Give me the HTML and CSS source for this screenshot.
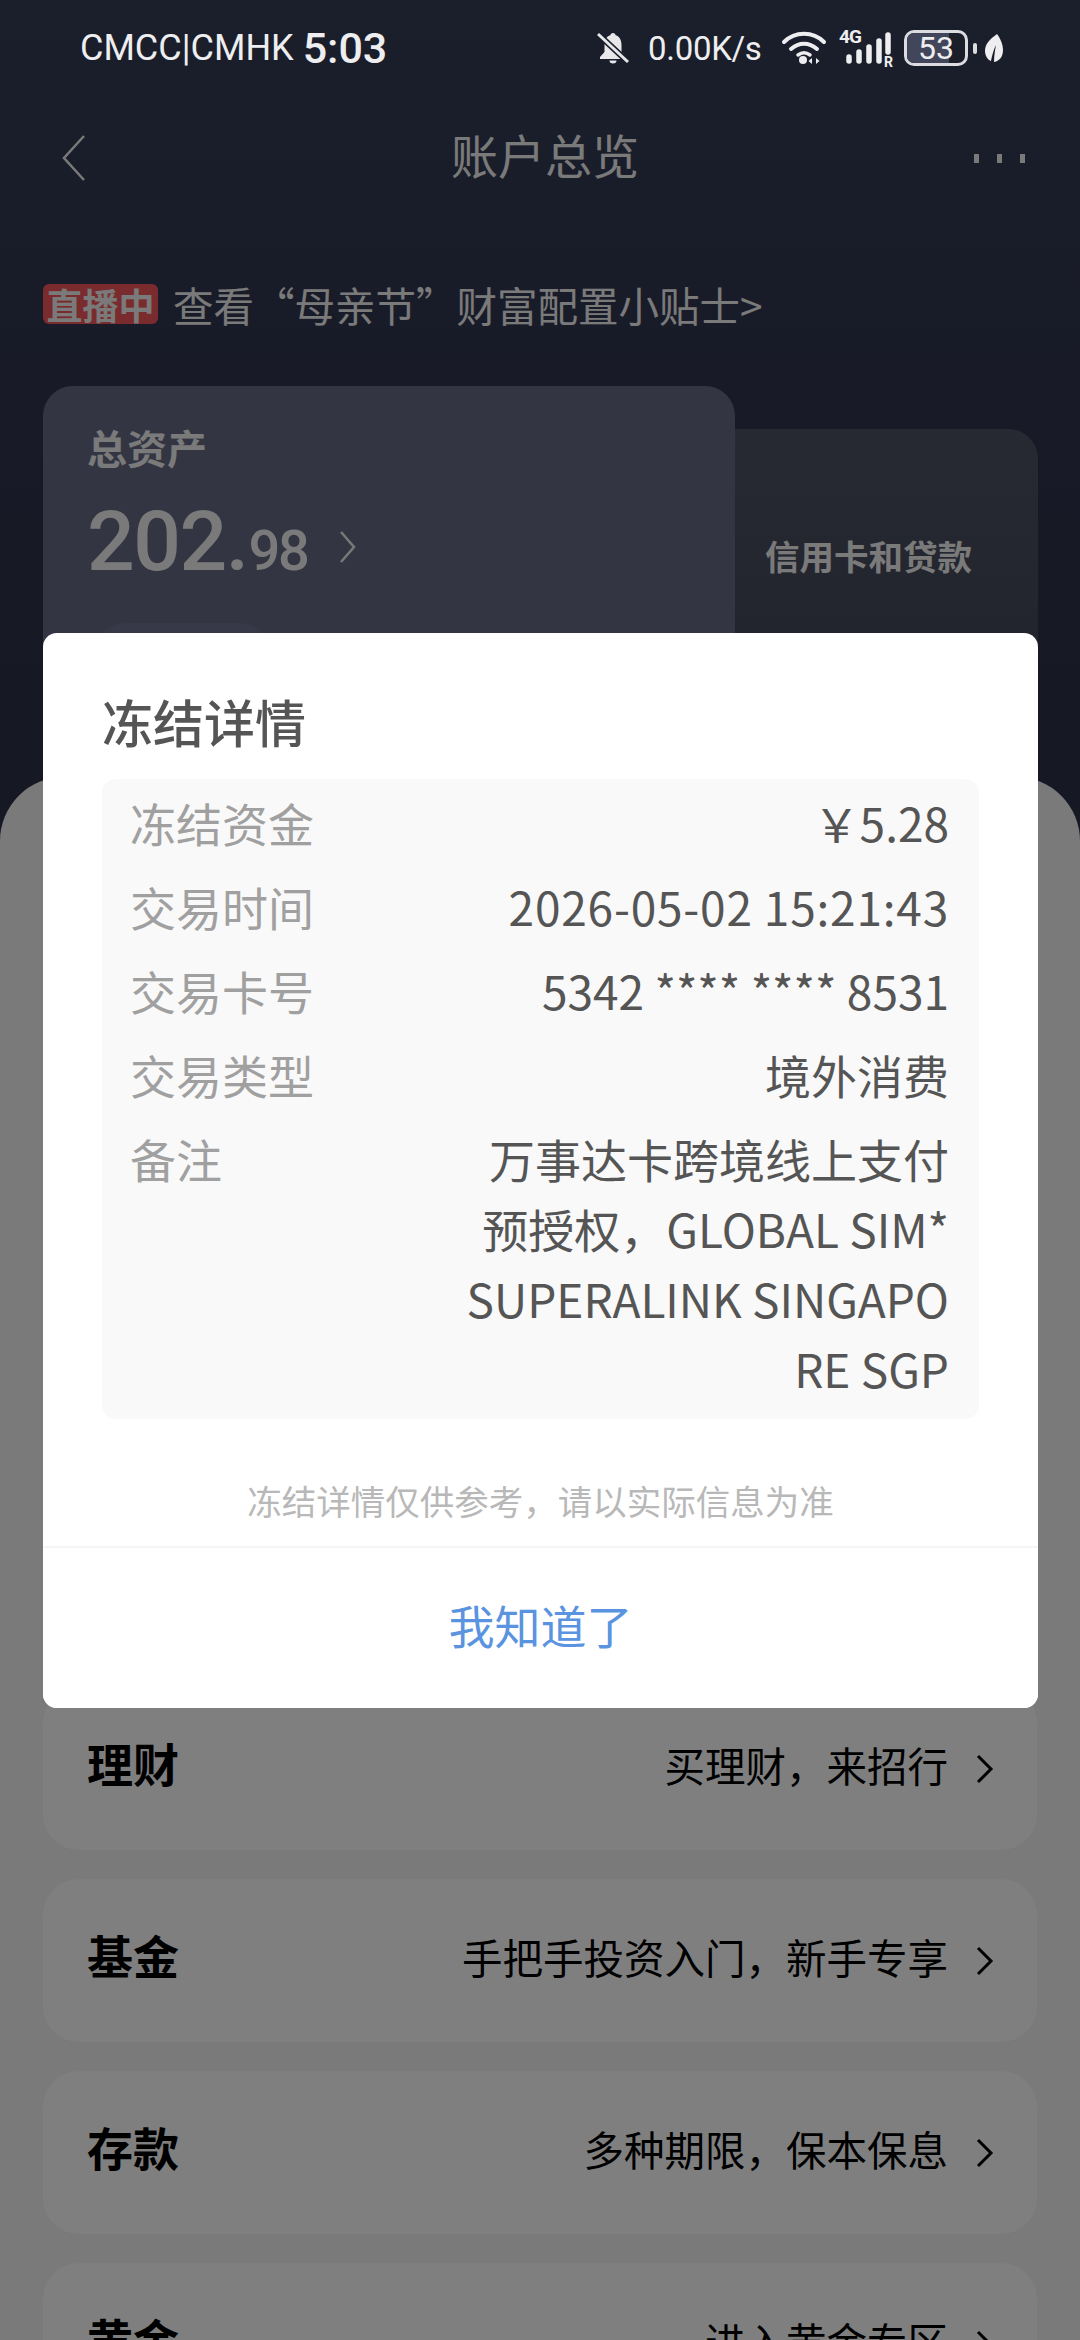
FILE: index.html
```html
<!DOCTYPE html>
<html lang="zh">
<head>
<meta charset="utf-8">
<title>账户总览</title>
<link rel="stylesheet" href="styles.css">
</head>
<body>
<div class="page">
  <header class="status">
    <div class="carrier"><span>CMCC|CMHK</span><span class="clock">5:03</span></div>
    <div class="status-right">
      <svg class="i-bell" viewBox="0 0 32 32"><path d="M16 1c-1.500 0-2.500 1-2.700 2.300C9.500 4.500 7.500 8 7.500 13v7L3 25v2h26v-2l-4.500-5v-7c0-5-2-8.500-5.800-9.700C18.500 2 17.500 1 16 1z" fill="#e8e8ea"/><path d="M12.500 28.500h7a3.500 3 0 0 1-7 0z" fill="#e8e8ea"/><path d="M1 2l30 28" stroke="#1b1f2c" stroke-width="6"/><path d="M1 2l30 28" stroke="#e8e8ea" stroke-width="3"/></svg>
      <span class="speed">0.00K/s</span>
      <svg class="i-wifi" viewBox="0 0 46 36" fill="none" stroke="#eeeef0" stroke-linecap="round"><path d="M3 12C14 1 32 1 43 12" stroke-width="4"/><path d="M10 19c8-7 18-7 26 0" stroke-width="4"/><path d="M17 25c4-3 8-3 12 0" stroke-width="3.500"/><circle cx="22" cy="30" r="4" fill="#eeeef0" stroke="none"/><path d="M31 34v-6l-3.500 3zM35 28v6l3.500-3z" fill="#eeeef0" stroke="none"/></svg>
      <div class="signal">
        <svg class="i-signal" viewBox="0 0 54 36" fill="none" stroke="#eeeef0" stroke-linecap="round" stroke-width="5.500"><path d="M10 31v-4M20 31v-9M30 31v-14M40 31v-20M49 22V5"/></svg>
        <span class="sig-4g">4G</span>
        <span class="sig-r">R</span>
      </div>
      <div class="battery-wrap">
        <div class="battery"><span class="battery-fill"></span><span class="battery-num">53</span></div>
        <span class="battery-nub"></span>
      </div>
      <svg class="i-leaf" viewBox="0 0 18 28"><path d="M12 0C5 5 0 10 0 17c0 5 3 9 6 10 1-6 3-12 5-16-1 5-2 11-2 17 6-1 9-6 9-12C18 10 15 4 12 0z" fill="#eeeef0"/></svg>
    </div>
  </header>

  <nav class="nav">
    <svg class="nav-back" viewBox="0 0 26 48" fill="none"><path d="M24 2 4 24l20 22" stroke="#f2f2f2" stroke-width="2.500"/></svg>
    <h1 class="nav-title">账户总览</h1>
    <div class="nav-more"><i></i><i></i><i></i></div>
  </nav>

  <div class="live"><span class="live-tag">直播中</span><span>查看“母亲节”财富配置小贴士&gt;</span></div>

  <section class="carousel">
    <div class="asset-card">
      <div class="asset-label">总资产</div>
      <div class="asset-value"><span class="big">202.</span><span class="small">98</span>
        <svg class="asset-chev" viewBox="0 0 18 34" fill="none"><path d="M2 2l13 15L2 32" stroke="#f2f2f2" stroke-width="2.500"/></svg>
      </div>
      <div class="asset-pill"></div>
    </div>
    <div class="side-card">信用卡和贷款</div>
  </section>

  <main class="sheet">
    <a class="row"><b>理财</b><span class="row-r">买理财，来招行<svg class="row-chev" viewBox="0 0 18 30" fill="none"><path d="M2 2l13 13L2 28" stroke="#000" stroke-width="3"/></svg></span></a>
    <a class="row"><b>基金</b><span class="row-r">手把手投资入门，新手专享<svg class="row-chev" viewBox="0 0 18 30" fill="none"><path d="M2 2l13 13L2 28" stroke="#000" stroke-width="3"/></svg></span></a>
    <a class="row"><b>存款</b><span class="row-r">多种期限，保本保息<svg class="row-chev" viewBox="0 0 18 30" fill="none"><path d="M2 2l13 13L2 28" stroke="#000" stroke-width="3"/></svg></span></a>
    <a class="row"><b>黄金</b><span class="row-r">进入黄金专区<svg class="row-chev" viewBox="0 0 18 30" fill="none"><path d="M2 2l13 13L2 28" stroke="#000" stroke-width="3"/></svg></span></a>
  </main>

  <div class="scrim">
    <div class="dialog">
      <div class="dialog-body">
        <h2 class="dialog-title">冻结详情</h2>
        <dl class="panel">
          <div class="kv"><dt>冻结资金</dt><dd>￥5.28</dd></div>
          <div class="kv"><dt>交易时间</dt><dd class="spaced">2026-05-02 15:21:43</dd></div>
          <div class="kv"><dt>交易卡号</dt><dd>5342 **** **** 8531</dd></div>
          <div class="kv"><dt>交易类型</dt><dd>境外消费</dd></div>
          <div class="kv"><dt>备注</dt><dd>万事达卡跨境线上支付<br>预授权，GLOBAL SIM*<br>SUPERALINK SINGAPO<br>RE SGP</dd></div>
        </dl>
        <p class="note">冻结详情仅供参考，请以实际信息为准</p>
      </div>
      <button class="ok">我知道了</button>
    </div>
  </div>
</div>
</body>
</html>
```
FILE: styles.css
```css
* { box-sizing: border-box; margin: 0; padding: 0; }
html, body { width: 1080px; height: 2340px; overflow: hidden; }
body { font-family: "Noto Sans CJK SC", "Noto Sans", sans-serif; }
.page {
  position: relative; width: 1080px; height: 2340px; overflow: hidden;
  background: linear-gradient(180deg, #363e58 0%, #30364e 17%, #2c3046 33%);
  color: #f5f5f5;
}
.status {
  position: relative; z-index: 3; height: 96px; padding: 0 77px 0 80px;
  display: flex; justify-content: space-between; align-items: center;
  color: #eeeef0; font-family: "Roboto", sans-serif;
}
.carrier { display: flex; align-items: center; gap: 9px; font-size: 36px; }
.clock { font-size: 43px; font-weight: 500; line-height: 50px; }
.status-right { display: flex; align-items: center; }
.i-bell { width: 32px; height: 32px; margin-right: 19px; }
.speed { font-size: 33px; width: 115px; letter-spacing: -.3px; margin-right: 18px; }
.i-wifi { width: 46px; height: 36px; margin-right: 12px; }
.signal { position: relative; width: 54px; height: 36px; margin-right: 11px; }
.i-signal { display: block; width: 54px; height: 36px; }
.sig-4g { position: absolute; left: 0; top: -3px; font-size: 19px; line-height: 20px; font-weight: 700; letter-spacing: -1px; }
.sig-r { position: absolute; right: 0; bottom: -4px; font-size: 14px; line-height: 16px; font-weight: 700; }
.battery-wrap { display: flex; align-items: center; gap: 5px; margin-right: 8px; }
.battery { position: relative; width: 64px; height: 36px; border: 3px solid #dcdce0; border-radius: 10px; overflow: hidden; display: flex; align-items: center; justify-content: center; }
.battery-fill { position: absolute; left: 0; top: 0; bottom: 0; width: 72%; background: #42465a; }
.battery-num { position: relative; font-size: 32px; line-height: 30px; }
.battery-nub { width: 4px; height: 11px; background: #dcdce0; border-radius: 2px; }
.i-leaf { width: 18px; height: 28px; }

.nav { height: 124px; padding: 0 55px 0 60px; display: grid; grid-template-columns: 1fr auto 1fr; align-items: center; }
.nav-back { width: 26px; height: 48px; }
.nav-title { font-size: 47px; font-weight: 400; line-height: 64px; padding-bottom: 8px; margin-left: 5px; }
.nav-more { display: flex; gap: 18px; justify-content: flex-end; }
.nav-more i { width: 5px; height: 9px; background: #f5f5f5; }

.live { height: 60px; margin-top: 54px; padding-left: 43px; display: flex; align-items: center; font-size: 40.500px; }
.live-tag { width: 115px; height: 40px; margin-right: 15px; background: #f4565a; border-radius: 6px; font-size: 36px; font-weight: 700; line-height: 40px; text-align: center; color: #f5f5f5; }

.carousel { height: 392px; margin-top: 52px; padding: 0 42px 0 43px; display: flex; align-items: flex-start; overflow: hidden; }
.asset-card { position: relative; z-index: 1; width: 692px; height: 480px; padding: 36px 44px; border-radius: 30px; background: #676b86; flex: none; }
.asset-label { font-size: 40px; font-weight: 700; line-height: 50px; }
.asset-value { display: flex; align-items: baseline; margin-top: 25px; font-family: "Roboto", sans-serif; font-weight: 500; line-height: 90px; }
.big { font-size: 84px; letter-spacing: -1.500px; margin-right: 1px; }
.small { font-size: 56px; letter-spacing: -2.500px; }
.asset-chev { width: 18px; height: 34px; margin-left: 32px; align-self: center; }
.asset-pill { width: 175px; height: 60px; margin: 27px 0 0 8px; border-radius: 30px 30px 0 0; background: #6e7290; }
.side-card {
  flex: 1; height: 430px; margin-top: 43px; margin-left: -30px; padding: 98px 0 0 60px;
  border-radius: 30px; background: linear-gradient(180deg, #4e5266 0%, #3c4052 100%);
  font-size: 34.500px; font-weight: 700; line-height: 56px;
}

.sheet {
  position: absolute; left: 0; right: 0; top: 777px; bottom: 0; z-index: 2;
  padding: 910px 43px 0 43px; background: #f5f5f5; border-radius: 64px 64px 0 0;
  display: flex; flex-direction: column; gap: 29px; color: #000;
}
.row { flex: none; height: 163px; padding: 0 43px 8px 44px; background: #fff; border-radius: 36px; display: flex; align-items: center; justify-content: space-between; font-size: 40.500px; }
.row b { font-size: 46px; font-weight: 700; padding-bottom: 5px; }
.row-r { display: flex; align-items: center; }
.row-chev { width: 18px; height: 30px; margin-left: 28px; position: relative; top: 4px; }

.scrim { position: absolute; inset: 0; z-index: 2; padding-left: 1px; background: rgba(0, 0, 0, .5); display: flex; align-items: center; justify-content: center; }
.dialog { width: 995px; height: 1075px; background: #fff; border-radius: 14px; display: flex; flex-direction: column; overflow: hidden; }
.dialog-body { flex: 1; padding: 55px 59px 0; }
.dialog-title { font-size: 51px; font-weight: 500; line-height: 66px; color: #555; margin-bottom: 25px; }
.panel { padding: 8px 30px 16px 28px; background: #f9f9f9; border-radius: 14px; display: flex; flex-direction: column; gap: 14px; font-size: 46px; line-height: 70px; }
.kv { display: flex; justify-content: space-between; }
.kv dt { color: #a0a0a0; }
.kv dd { width: 520px; text-align: right; color: #555; }
.kv .spaced { letter-spacing: .8px; }
.note { margin-top: 56px; font-size: 34.500px; line-height: 50px; text-align: center; color: #b8b8b8; }
.ok { flex: none; height: 162px; padding-bottom: 8px; border: 0; border-top: 2px solid #f5f5f5; background: #fff; font: inherit; font-size: 46px; color: #5a93e0; }
```
